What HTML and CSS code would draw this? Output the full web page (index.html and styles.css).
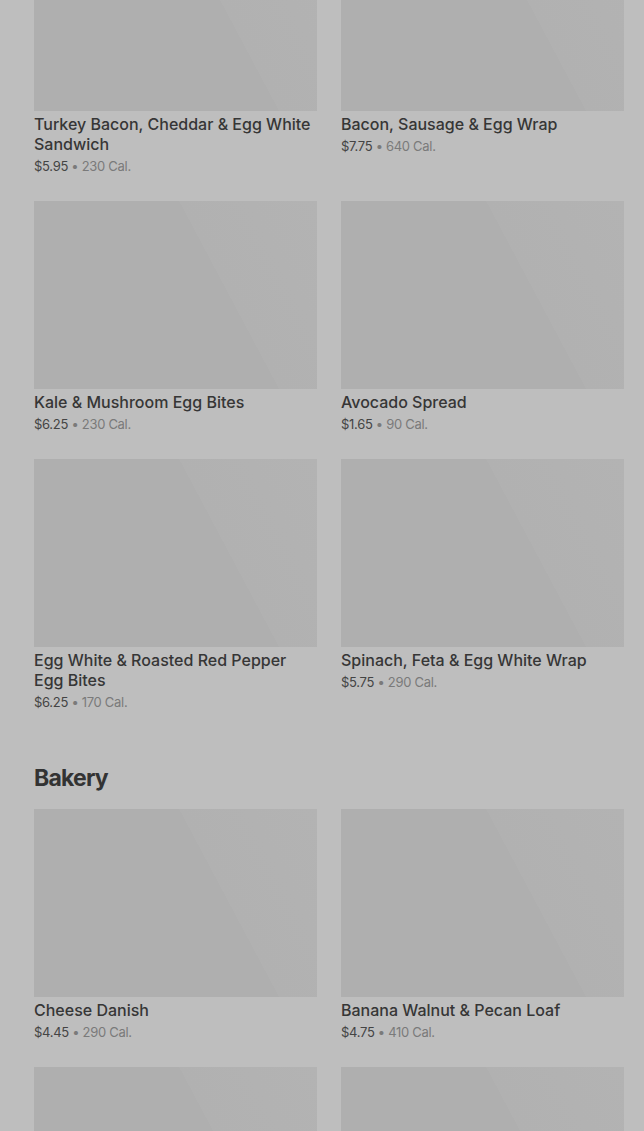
FILE: index.html
```html
<!DOCTYPE html>
<html lang="en">
<head>
    <meta charset="UTF-8">
    <meta name="viewport" content="width=device-width, initial-scale=1.0">
    <title>Menu - Breakfast &amp; Bakery</title>
    <link rel="stylesheet" href="styles.css">
</head>
<body>
    <div class="menu">
        <section class="category">
            <div class="grid">
                <div class="item">
                    <div class="thumb"></div>
                    <div class="name">Turkey Bacon, Cheddar &amp; Egg White Sandwich</div>
                    <div class="meta"><span class="price">$5.95</span> • 230 Cal.</div>
                </div>
                <div class="item">
                    <div class="thumb"></div>
                    <div class="name">Bacon, Sausage &amp; Egg Wrap</div>
                    <div class="meta"><span class="price">$7.75</span> • 640 Cal.</div>
                </div>
                <div class="item">
                    <div class="thumb"></div>
                    <div class="name">Kale &amp; Mushroom Egg Bites</div>
                    <div class="meta"><span class="price">$6.25</span> • 230 Cal.</div>
                </div>
                <div class="item">
                    <div class="thumb"></div>
                    <div class="name">Avocado Spread</div>
                    <div class="meta"><span class="price">$1.65</span> • 90 Cal.</div>
                </div>
                <div class="item">
                    <div class="thumb"></div>
                    <div class="name">Egg White &amp; Roasted Red Pepper Egg Bites</div>
                    <div class="meta"><span class="price">$6.25</span> • 170 Cal.</div>
                </div>
                <div class="item">
                    <div class="thumb"></div>
                    <div class="name">Spinach, Feta &amp; Egg White Wrap</div>
                    <div class="meta"><span class="price">$5.75</span> • 290 Cal.</div>
                </div>
            </div>
        </section>

        <section class="category">
            <h2>Bakery</h2>
            <div class="grid">
                <div class="item">
                    <div class="thumb"></div>
                    <div class="name">Cheese Danish</div>
                    <div class="meta"><span class="price">$4.45</span> • 290 Cal.</div>
                </div>
                <div class="item">
                    <div class="thumb"></div>
                    <div class="name">Banana Walnut &amp; Pecan Loaf</div>
                    <div class="meta"><span class="price">$4.75</span> • 410 Cal.</div>
                </div>
                <div class="item">
                    <div class="thumb"></div>
                </div>
                <div class="item">
                    <div class="thumb"></div>
                </div>
            </div>
        </section>
    </div>
</body>
</html>
```

FILE: styles.css
```css
* {
    margin: 0;
    padding: 0;
    box-sizing: border-box;
}

body {
    background: #bebebe;
    font-family: Inter, Roboto, "Liberation Sans", sans-serif;
    color: #333;
    overflow: hidden;
}

.menu {
    padding: 0 20px 0 34px;
    margin-top: -77px;
}

.category h2 {
    font-size: 23px;
    font-weight: 700;
    letter-spacing: -0.8px;
    line-height: 30px;
    color: #333;
    margin: 51px 0 16px;
}

.grid {
    display: grid;
    grid-template-columns: 1fr 1fr;
    column-gap: 24px;
    row-gap: 25px;
}

.thumb {
    height: 188px;
    background: linear-gradient(62deg, #afafaf 0%, #afafaf 64%, #b1b1b1 64%, #b3b3b3 100%);
}

.name {
    margin-top: 3px;
    font-size: 16px;
    font-weight: 500;
    line-height: 20px;
    color: #363636;
}

.meta {
    margin-top: 3px;
    font-size: 13px;
    letter-spacing: -0.3px;
    line-height: 19px;
    color: #7a7a7a;
}

.price {
    color: #444;
}
```
